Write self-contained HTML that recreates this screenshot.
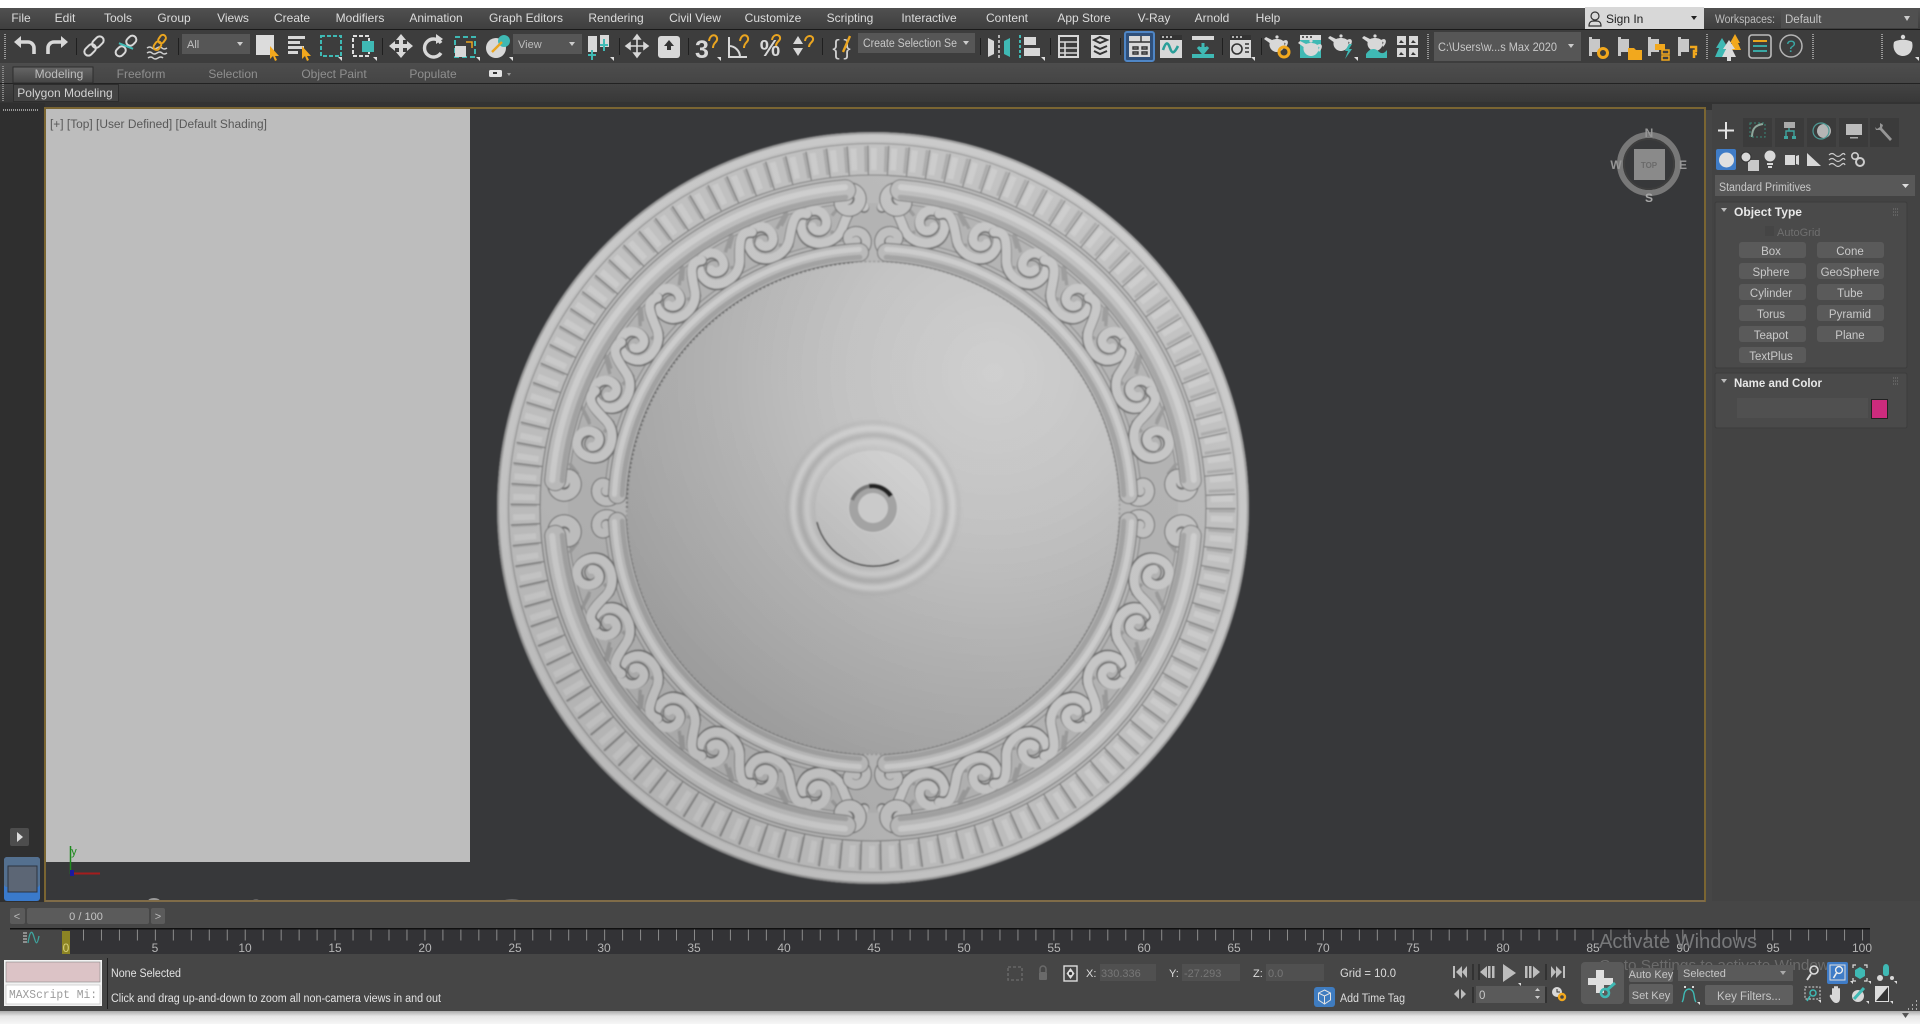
<!DOCTYPE html>
<html lang="en">
<head>
<meta charset="utf-8">
<title>3ds Max 2020</title>
<style>
html,body{margin:0;padding:0;background:#454545;overflow:hidden;width:1920px;height:1024px}
svg{display:block}
text{font-family:"Liberation Sans",Arial,sans-serif;font-size:12px;fill:#d4d4d4}
.m{text-anchor:middle}
.menu{fill:#dcdcdc}
.dim{fill:#8f8f8f}
.btn{fill:#c9c9c9;text-anchor:middle;font-size:11.5px}
.ico{fill:none;stroke:#d8d8d8;stroke-width:2}
.teal{fill:none;stroke:#3fb9b4;stroke-width:2}
.org{fill:none;stroke:#eaa520;stroke-width:2}
.w{fill:#d8d8d8}
.t{fill:#3fb9b4}
.o{fill:#f2a81d}
.sep{stroke:#1f1f1f;stroke-width:1}
.tk{fill:#b5b5b5;text-anchor:middle;font-size:12px}
</style>
</head>
<body>
<svg width="1920" height="1024" viewBox="0 0 1920 1024" xmlns="http://www.w3.org/2000/svg">
<defs>
<linearGradient id="mb" x1="0" y1="0" x2="0" y2="1"><stop offset="0" stop-color="#505050"/><stop offset="1" stop-color="#3e3e3e"/></linearGradient>
<linearGradient id="rb" x1="0" y1="0" x2="0" y2="1"><stop offset="0" stop-color="#4d4d4d"/><stop offset="1" stop-color="#454545"/></linearGradient>
<linearGradient id="pb" x1="0" y1="0" x2="0" y2="1"><stop offset="0" stop-color="#434343"/><stop offset="1" stop-color="#383838"/></linearGradient>
<linearGradient id="ab" x1="0" y1="0" x2="0" y2="1"><stop offset="0" stop-color="#666"/><stop offset="1" stop-color="#454545"/></linearGradient>
<linearGradient id="wb" x1="0" y1="0" x2="0" y2="1"><stop offset="0" stop-color="#aaa"/><stop offset=".4" stop-color="#e6e6e6"/><stop offset="1" stop-color="#f6f6f6"/></linearGradient>
<radialGradient id="dome" gradientUnits="userSpaceOnUse" cx="120" cy="-135" r="470"><stop offset="0" stop-color="#d0d0d0"/><stop offset=".3" stop-color="#c4c4c4"/><stop offset=".62" stop-color="#b0b0b0"/><stop offset="1" stop-color="#9c9c9c"/></radialGradient>
<linearGradient id="lit" gradientUnits="userSpaceOnUse" x1="260" y1="-300" x2="-260" y2="300"><stop offset="0" stop-color="#fff" stop-opacity=".08"/><stop offset=".5" stop-color="#888" stop-opacity="0"/><stop offset="1" stop-color="#000" stop-opacity=".08"/></linearGradient>
<linearGradient id="plate" gradientUnits="userSpaceOnUse" x1="40" y1="-45" x2="-40" y2="45"><stop offset="0" stop-color="#d2d2d2"/><stop offset="1" stop-color="#bcbcbc"/></linearGradient>
<filter id="soft" x="-5%" y="-5%" width="110%" height="110%"><feGaussianBlur stdDeviation=".7"/></filter>
<filter id="soft2" x="-10%" y="-10%" width="120%" height="120%"><feGaussianBlur stdDeviation="2.2"/></filter>
<g id="tp">
<path d="M-7,-3 C-5,-7 5,-7 7,-3 C9,2 5,7 0,7 C-5,7 -9,2 -7,-3 Z"/>
<path d="M-6,-1 L-13,-6 L-11,-8 L-5,-5 Z"/>
<path d="M6,-4 C11,-7 13,-2 8,3 L7,1 C9,-1 9,-3 6,-2 Z"/>
<circle cx="0" cy="-8" r="1.6"/>
</g>
<g id="sc">
<path d="M-30,-17 L-16,-6 M-24,14 L-12,8 M22,-16 L30,-6" stroke="#999" stroke-width="3" fill="none"/>
<path d="M-46,-8 C-36,-16 -30,-4 -22,8 C-16,16 -2,20 8,12 C16,5 14,-12 2,-14 C-8,-15 -13,-5 -9,2 C-6,7 2,6 3,0" fill="none" stroke="#6e6e6e" stroke-width="9.5" stroke-linecap="round" transform="translate(.4,.8)"/>
<path d="M-46,-8 C-36,-16 -30,-4 -22,8 C-16,16 -2,20 8,12 C16,5 14,-12 2,-14 C-8,-15 -13,-5 -9,2 C-6,7 2,6 3,0" fill="none" stroke="#c6c6c6" stroke-width="8" stroke-linecap="round"/>
<path d="M-6,-3 C-3,-8 5,-8 7,-2" fill="none" stroke="#6a6a6a" stroke-width="1"/>
</g>
<g id="hook">
<path d="M30,-319 C16,-322 10,-312 14,-304 C18,-296 28,-296 32,-302 C35,-307 30,-312 26,-309" fill="none" stroke="#6a6a6a" stroke-width="13" stroke-linecap="round"/>
<path d="M30,-319 C16,-322 10,-312 14,-304 C18,-296 28,-296 32,-302 C35,-307 30,-312 26,-309" fill="none" stroke="#c2c2c2" stroke-width="11" stroke-linecap="round"/>
<path d="M16,-255 C6,-258 4,-268 10,-274 C16,-279 25,-276 25,-270 C25,-265 19,-264 17,-267" fill="none" stroke="#6a6a6a" stroke-width="11" stroke-linecap="round"/>
<path d="M16,-255 C6,-258 4,-268 10,-274 C16,-279 25,-276 25,-270 C25,-265 19,-264 17,-267" fill="none" stroke="#c0c0c0" stroke-width="9" stroke-linecap="round"/>
</g>
<g id="q">
<path d="M24,-304.5 A305.5,305.5 0 0 1 304.5,-24" fill="none" stroke="#8a8a8a" stroke-width="1.1"/>
<path d="M20,-268 A268.5,268.5 0 0 1 268,-20" fill="none" stroke="#8a8a8a" stroke-width="1.1"/>
<use href="#sc" transform="rotate(11.5) translate(0,-288) scale(1.12)"/>
<use href="#sc" transform="rotate(22.5) translate(0,-288) scale(1.12)"/>
<use href="#sc" transform="rotate(33.5) translate(0,-288) scale(1.12)"/>
<use href="#sc" transform="rotate(44.5) translate(0,-288) scale(1.12)"/>
<use href="#sc" transform="rotate(55.5) translate(0,-288) scale(1.12)"/>
<use href="#sc" transform="rotate(66.5) translate(0,-288) scale(1.12)"/>
<use href="#sc" transform="rotate(77) translate(0,-288) scale(1.12)"/>
<use href="#hook"/>
<use href="#hook" transform="matrix(0,-1,-1,0,0,0)"/>
<path d="M27.8,-317.8 A319,319 0 0 1 317.8,-27.8" fill="none" stroke="#787878" stroke-width="22" stroke-linecap="round"/>
<path d="M27.8,-317.8 A319,319 0 0 1 317.8,-27.8" fill="none" stroke="#bdbdbd" stroke-width="20" stroke-linecap="round"/>
<path d="M27.2,-310.8 A312,312 0 0 1 310.8,-27.2" fill="none" stroke="#a4a4a4" stroke-width="5" stroke-linecap="round"/>
<path d="M28,-320.8 A322,322 0 0 1 320.8,-28" fill="none" stroke="#cecece" stroke-width="6" stroke-linecap="round"/>
<path d="M13.4,-255.6 A256,256 0 0 1 255.6,-13.4" fill="none" stroke="#727272" stroke-width="19" stroke-linecap="round"/>
<path d="M13.4,-255.6 A256,256 0 0 1 255.6,-13.4" fill="none" stroke="#bababa" stroke-width="17" stroke-linecap="round"/>
<path d="M13.1,-250.7 A251,251 0 0 1 250.7,-13.1" fill="none" stroke="#a2a2a2" stroke-width="5" stroke-linecap="round"/>
<path d="M13.6,-258.6 A259,259 0 0 1 258.6,-13.6" fill="none" stroke="#cccccc" stroke-width="5" stroke-linecap="round"/>
</g>
</defs>

<!-- base -->
<rect width="1920" height="1024" fill="#464646"/>
<rect width="1920" height="8" fill="#fff"/>
<rect y="8" width="1920" height="22" fill="url(#mb)"/>
<rect y="29" width="1920" height="1" fill="#1a1a1a"/>
<rect y="30" width="1920" height="33" fill="#3d3d3d"/>
<rect y="63" width="1920" height="20" fill="url(#rb)"/>
<rect y="83" width="1920" height="1" fill="#222"/>
<rect y="84" width="1920" height="18" fill="url(#pb)"/>
<rect y="102" width="1920" height="8" fill="#333"/>
<rect y="103" width="45" height="800" fill="#2f2f2f"/>

<!-- viewport -->
<rect x="45" y="108" width="1660" height="793" fill="#37383a"/>
<rect x="46" y="109" width="424" height="753" fill="#bdbdbd"/>

<!-- ceiling medallion -->
<g transform="translate(873,508)">
<g filter="url(#soft)">
<circle r="376" fill="#c0c0c0"/>
<circle r="375" fill="none" stroke="#969696" stroke-width="2"/>
<circle r="370" fill="none" stroke="#c8c8c8" stroke-width="6"/>
<circle r="364.5" fill="none" stroke="#8c8c8c" stroke-width="1"/>
<circle r="364" fill="#bfbfbf" opacity="0"/>
<circle r="349" fill="none" stroke="#c0c0c0" stroke-width="29"/>
<circle r="349" fill="none" stroke="#a9a9a9" stroke-width="26" stroke-dasharray="3 16.93" stroke-dashoffset="-1.5"/>
<circle r="349" fill="none" stroke="#cbcbcb" stroke-width="22" stroke-dasharray="6 13.93" stroke-dashoffset="-8"/>
<circle r="348" fill="none" stroke="#7a7a7a" stroke-width="29" stroke-dasharray="1.2 18.73"/>
<circle r="333" fill="#b8b8b8" stroke="#7c7c7c" stroke-width="1.1"/>
<circle r="286" fill="none" stroke="#b2b2b2" stroke-width="38"/>
<use href="#q"/>
<use href="#q" transform="scale(-1,1)"/>
<use href="#q" transform="scale(1,-1)"/>
<use href="#q" transform="scale(-1,-1)"/>
<circle r="246" fill="url(#dome)"/>
<circle r="246.5" fill="none" stroke="#666" stroke-width="1.6" stroke-dasharray="2.2 2.2" opacity=".4"/>
<path d="M-246,0 A246.5,246.5 0 0 1 -20,-245.5" fill="none" stroke="#4a4a4a" stroke-width="1.8" stroke-dasharray="2.2 2.2" opacity=".55"/>
</g>
<g filter="url(#soft2)">
<circle r="80" fill="none" stroke="#d8d8d8" stroke-width="5" opacity=".7"/>
<circle r="73" fill="none" stroke="#989898" stroke-width="4" opacity=".5"/>
<circle r="66" fill="none" stroke="#d4d4d4" stroke-width="5" opacity=".7"/>
<circle r="85" fill="none" stroke="#8c8c8c" stroke-width="3" opacity=".3"/>
</g>
<g filter="url(#soft)">
<circle r="57.5" fill="url(#plate)"/>
<path d="M-56,14 A58,58 0 0 0 26,52" fill="none" stroke="#444" stroke-width="1.4"/>
<circle r="24" fill="#a3a3a3"/>
<path d="M-4,-22 A22.5,22.5 0 0 1 18,-12" fill="none" stroke="#222" stroke-width="5"/>
<path d="M-21,-8 A23,23 0 0 1 -4,-22" fill="none" stroke="#777" stroke-width="4"/>
<circle r="24.5" fill="none" stroke="#d8d8d8" stroke-width="1" opacity=".5"/>
<circle r="15" fill="#cacaca"/>
</g>
<circle r="376" fill="url(#lit)"/>
</g>

<!-- bumps below viewport -->
<ellipse cx="154" cy="901" rx="6" ry="3" fill="#9a9a9a"/>
<ellipse cx="256" cy="901" rx="4" ry="1.5" fill="#909090"/>
<ellipse cx="512" cy="901" rx="10" ry="1.5" fill="#8f8f8f"/>

<!-- viewport border -->
<rect x="45" y="108" width="1660" height="793" fill="none" stroke="#7a6532" stroke-width="2"/>
<rect x="45" y="900" width="1660" height="2" fill="#806c48"/>
<text x="50" y="128" style="fill:#585858;font-size:11.5px" textLength="217" lengthAdjust="spacingAndGlyphs">[+] [Top] [User Defined] [Default Shading]</text>

<!-- axis tripod -->
<line x1="70.5" y1="846" x2="70.5" y2="874" stroke="#1d8a1d" stroke-width="1.5"/>
<line x1="71" y1="873.5" x2="100" y2="873.5" stroke="#a51d1d" stroke-width="2"/>
<rect x="70" y="870" width="4" height="6" fill="#1a1aa0"/>
<text x="74" y="855" class="m" style="fill:#1d8a1d;font-size:11px">y</text>

<!-- ViewCube -->
<circle cx="1649" cy="164" r="29" fill="none" stroke="#787878" stroke-width="6"/>
<circle cx="1649" cy="164" r="25" fill="none" stroke="#3e3e3e" stroke-width="2"/>
<rect x="1634" y="149" width="31" height="31" fill="#8a8a8a"/>
<text x="1649" y="168" class="m" style="fill:#6a6a6a;font-size:8px;font-weight:bold">TOP</text>
<text x="1649" y="137" class="m" style="fill:#969696;font-size:12px;font-weight:bold">N</text>
<text x="1649" y="202" class="m" style="fill:#a8a8a8;font-size:12px;font-weight:bold">S</text>
<text x="1683" y="169" class="m" style="fill:#969696;font-size:12px;font-weight:bold">E</text>
<text x="1616" y="169" class="m" style="fill:#969696;font-size:12px;font-weight:bold">W</text>

<!-- menu -->
<g class="menu">
<text x="21" y="22" class="m menu">File</text>
<text x="65" y="22" class="m menu">Edit</text>
<text x="118" y="22" class="m menu">Tools</text>
<text x="174" y="22" class="m menu">Group</text>
<text x="233" y="22" class="m menu">Views</text>
<text x="292" y="22" class="m menu">Create</text>
<text x="360" y="22" class="m menu">Modifiers</text>
<text x="436" y="22" class="m menu">Animation</text>
<text x="526" y="22" class="m menu">Graph Editors</text>
<text x="616" y="22" class="m menu">Rendering</text>
<text x="695" y="22" class="m menu">Civil View</text>
<text x="773" y="22" class="m menu">Customize</text>
<text x="850" y="22" class="m menu">Scripting</text>
<text x="929" y="22" class="m menu">Interactive</text>
<text x="1007" y="22" class="m menu">Content</text>
<text x="1084" y="22" class="m menu">App Store</text>
<text x="1154" y="22" class="m menu">V-Ray</text>
<text x="1212" y="22" class="m menu">Arnold</text>
<text x="1268" y="22" class="m menu">Help</text>
</g>

<!-- sign in / workspaces -->
<rect x="1585" y="7" width="119" height="22" fill="#d8d8d8"/>
<circle cx="1595" cy="16" r="4" fill="none" stroke="#333" stroke-width="1.2"/>
<path d="M1589,26 C1589,21 1592,21 1595,21 C1598,21 1601,21 1601,26 Z" fill="none" stroke="#333" stroke-width="1.2"/>
<text x="1606" y="23" style="fill:#222">Sign In</text>
<path d="M1691,16 h6 l-3,4 z" fill="#222"/>
<text x="1715" y="23" style="fill:#bdbdbd;font-size:11.5px" textLength="60" lengthAdjust="spacingAndGlyphs">Workspaces:</text>
<rect x="1781" y="8" width="137" height="20" fill="#505050"/>
<text x="1785" y="23" style="fill:#c4c4c4;font-size:11.5px">Default</text>
<path d="M1904,16 h6 l-3,5 z" fill="#ccc"/>

<!-- grips -->
<line x1="5" y1="34" x2="5" y2="60" stroke="#999" stroke-width="2" stroke-dasharray="1 1"/>
<line x1="3" y1="66" x2="3" y2="101" stroke="#888" stroke-width="2" stroke-dasharray="1 1"/>
<line x1="3" y1="110" x2="38" y2="110" stroke="#999" stroke-width="2" stroke-dasharray="1 1"/>
<line x1="1712" y1="111" x2="1917" y2="111" stroke="#8b8b8b" stroke-width="2" stroke-dasharray="1 1"/>
<line x1="3" y1="908" x2="3" y2="952" stroke="#888" stroke-width="2" stroke-dasharray="1 1"/>

<!-- toolbar -->
<g transform="translate(25,46)"><path d="M-7,-4 H3 A6,6 0 0 1 9,2 V8" fill="none" stroke="#d8d8d8" stroke-width="3.6"/><path d="M-11,-4 L-4,-10 V2 Z" class="w"/></g>
<g transform="translate(57,46) scale(-1,1)"><path d="M-7,-4 H3 A6,6 0 0 1 9,2 V8" fill="none" stroke="#d8d8d8" stroke-width="3.6"/><path d="M-11,-4 L-4,-10 V2 Z" class="w"/></g>
<line x1="76.5" y1="38" x2="76.5" y2="55" class="sep"/>
<g transform="translate(94,46) rotate(-45)"><rect x="-12" y="-4" width="13" height="8" rx="4" class="ico"/><rect x="-1" y="-4" width="13" height="8" rx="4" class="ico"/></g>
<g transform="translate(126,46) rotate(-45)"><rect x="-13" y="-4" width="11" height="8" rx="4" class="ico"/><rect x="2" y="-4" width="11" height="8" rx="4" class="ico"/><path d="M-3,-7 L3,7" class="teal"/></g>
<g transform="translate(158,46)"><path d="M-11,2 q3,-2 5,0 t5,0 t5,0 t5,0 M-11,7 q3,-2 5,0 t5,0 t5,0 t5,0 M-10,12 q3,-2 5,0 t5,0 t5,0" fill="none" stroke="#cfcfcf" stroke-width="1.5"/><g transform="translate(2,-4) rotate(-55)"><rect x="-9" y="-3" width="9" height="6" rx="3" class="org"/><rect x="-1" y="-3" width="9" height="6" rx="3" class="org"/></g></g>
<line x1="178.5" y1="38" x2="178.5" y2="55" class="sep"/>
<rect x="182" y="34" width="68" height="20" fill="#565656"/>
<text x="187" y="48" style="fill:#c2c2c2;font-size:11px">All</text>
<path d="M237,42 h6 l-3,4 z" fill="#ccc"/>
<rect x="256" y="35" width="18" height="20" fill="#dcdcdc"/>
<path d="M270,46 l0,13 l3,-3 l2,5 l2,-1 l-2,-4 h4 z" class="o"/>
<g class="w"><rect x="288" y="36" width="17" height="3"/><rect x="288" y="41" width="12" height="3"/><rect x="288" y="46" width="16" height="3"/><rect x="288" y="51" width="10" height="3"/></g>
<path d="M302,46 l0,13 l3,-3 l2,5 l2,-1 l-2,-4 h4 z" class="o"/>
<rect x="321" y="36" width="20" height="20" fill="none" stroke="#3fb9b4" stroke-width="2" stroke-dasharray="4 2"/>
<path d="M342,61 v-4 h-4 z" fill="#ddd"/>
<rect x="353" y="36" width="16" height="20" fill="none" stroke="#ddd" stroke-width="2" stroke-dasharray="4 2"/>
<rect x="362" y="41" width="12" height="11" fill="#3fb9b4"/>
<path d="M377,61 v-4 h-4 z" fill="#ddd"/>
<line x1="382.5" y1="38" x2="382.5" y2="55" class="sep"/>
<path d="M401,34 l5,6 h-3 v4 h4 v-3 l6,5 l-6,5 v-3 h-4 v4 h3 l-5,6 l-5,-6 h3 v-4 h-4 v3 l-6,-5 l6,-5 v3 h4 v-4 h-3 z" class="w"/>
<path d="M441,43 A9,9 0 1 0 441,53" fill="none" stroke="#d8d8d8" stroke-width="3.4"/>
<path d="M436,34 l7,5 l-7,5 z" class="w"/>
<rect x="455" y="37" width="20" height="20" fill="none" stroke="#3fb9b4" stroke-width="2" stroke-dasharray="5 3"/>
<rect x="455" y="46" width="11" height="11" class="w"/>
<path d="M466,42 h6 v6" fill="none" stroke="#eaa520" stroke-width="1.5"/>
<path d="M480,61 v-4 h-4 z" fill="#ddd"/>
<circle cx="496" cy="48" r="10" class="w"/>
<circle cx="504" cy="41" r="6" class="t"/>
<path d="M492,52 L502,42" stroke="#eaa520" stroke-width="2.4"/>
<path d="M513,61 v-4 h-4 z" fill="#ddd"/>
<rect x="513" y="34" width="69" height="20" fill="#565656"/>
<text x="518" y="48" style="fill:#bdbdbd;font-size:11px">View</text>
<path d="M569,42 h6 l-3,4 z" fill="#ccc"/>
<g transform="translate(599,46)"><rect x="-11" y="-10" width="9" height="16" class="w"/><rect x="1" y="-11" width="9" height="12" class="w"/><path d="M-7,4 v10 M-11,9 h8 M5,-7 v12 M1,-1 h8" stroke="#3fb9b4" stroke-width="2" fill="none"/></g>
<path d="M614,61 v-4 h-4 z" fill="#ddd"/>
<line x1="619.5" y1="38" x2="619.5" y2="55" class="sep"/>
<path d="M637,36 v20 M627,46 h20 M637,35 l-3,4 h6 z M648,46 l-4,-3 v6 z M626,46 l4,-3 v6 z M637,57 l-3,-4 h6 z" stroke="#d8d8d8" stroke-width="1.6" fill="#d8d8d8"/>
<rect x="658" y="36" width="22" height="22" rx="3" class="w"/>
<path d="M669,40 l5,6 h-3 v4 h-4 v-4 h-3 z" fill="#333"/>
<line x1="688.5" y1="38" x2="688.5" y2="55" class="sep"/>
<text x="702" y="58" class="m" style="fill:#d8d8d8;font-size:25px;font-weight:bold">3</text>
<path d="M709,41 c1,-8 9,-7 8,-1 c-1,3 -4,3 -4,8" class="org"/>
<path d="M721,61 v-4 h-4 z" fill="#ddd"/>
<path d="M729,37 V57 H747 M729,46 C735,46 740,51 740,57" fill="none" stroke="#d8d8d8" stroke-width="2"/>
<path d="M740,41 c1,-8 9,-7 8,-1 c-1,3 -4,3 -4,8" class="org"/>
<text x="770" y="56" class="m" style="fill:#d8d8d8;font-size:23px;font-weight:bold">%</text>
<path d="M772,40 c1,-7 9,-6 8,-1 c-1,3 -4,3 -4,7" class="org"/>
<path d="M793,44 l5,-8 l5,8 z M793,48 h10 l-5,8 z" class="w"/>
<path d="M805,41 c1,-7 9,-6 8,-1 c-1,3 -4,3 -4,7" class="org"/>
<line x1="822.5" y1="38" x2="822.5" y2="55" class="sep"/>
<text x="836" y="55" class="m" style="fill:#d0d0d0;font-size:22px">{</text>
<text x="847" y="55" class="m" style="fill:#d0d0d0;font-size:22px">}</text>
<path d="M843,52 L850,36" stroke="#eaa520" stroke-width="2.4"/>
<rect x="858" y="33" width="117" height="20" fill="#565656"/>
<text x="863" y="47" style="fill:#c8c8c8;font-size:11.5px" textLength="94" lengthAdjust="spacingAndGlyphs">Create Selection Se</text>
<path d="M963,41 h6 l-3,4 z" fill="#ccc"/>
<line x1="980.5" y1="38" x2="980.5" y2="55" class="sep"/>
<path d="M988,38 l6,3 v13 l-6,3 z" class="w"/>
<line x1="999" y1="35" x2="999" y2="58" stroke="#ddd" stroke-width="1.5" stroke-dasharray="3 2"/>
<path d="M1010,38 l-6,3 v13 l6,3 z" class="t"/>
<line x1="1020" y1="35" x2="1020" y2="58" stroke="#3fb9b4" stroke-width="2" stroke-dasharray="3 2"/>
<rect x="1024" y="37" width="12" height="8" class="w"/>
<rect x="1024" y="48" width="16" height="8" class="w"/>
<path d="M1045,61 v-4 h-4 z" fill="#ddd"/>
<line x1="1050.5" y1="38" x2="1050.5" y2="55" class="sep"/>
<rect x="1059" y="36" width="19" height="21" fill="none" stroke="#d8d8d8" stroke-width="2"/>
<path d="M1059,42 h19 M1059,48 h19 M1059,53 h19 M1065,42 v15" stroke="#d8d8d8" stroke-width="1.6"/>
<rect x="1091" y="35" width="19" height="23" class="w"/>
<path d="M1094,40 l6,-3 l7,3 l-7,3 z M1094,46 l6,3 l7,-3 M1094,51 l6,3 l7,-3" fill="none" stroke="#333" stroke-width="2"/>
<line x1="1120.5" y1="38" x2="1120.5" y2="55" class="sep"/>
<rect x="1125" y="32" width="29" height="29" rx="2" fill="#30507a" stroke="#4f86c6" stroke-width="2"/>
<rect x="1129" y="36" width="21" height="21" class="w"/>
<path d="M1129,42 h12 v-6 M1141,42 h9 M1133,47 h5 v2 h-5z M1142,47 h5 v2 h-5z M1133,52 h5 v2 h-5z M1142,52 h5 v2 h-5z" stroke="#333" stroke-width="1.4" fill="none"/>
<rect x="1160" y="35" width="22" height="23" class="w"/>
<rect x="1160" y="35" width="22" height="5" fill="#333"/><path d="M1162,37 h2 M1166,37 h2 M1170,37 h2" stroke="#ddd" stroke-width="1.5"/>
<path d="M1163,50 c3,-9 5,-8 7,-2 s4,6 8,-2" class="teal" style="stroke-width:2.6;stroke:#2a9e99"/>
<rect x="1192" y="36" width="22" height="4" class="w"/>
<path d="M1203,43 v8 M1198,47 l5,6 l5,-6" stroke="#3fb9b4" stroke-width="3" fill="#3fb9b4"/>
<rect x="1192" y="54" width="22" height="4" class="t"/>
<line x1="1222.5" y1="38" x2="1222.5" y2="55" class="sep"/>
<rect x="1230" y="35" width="21" height="23" class="w"/>
<rect x="1230" y="35" width="21" height="5" fill="#333"/><path d="M1232,37 h2 M1236,37 h2 M1240,37 h2" stroke="#ddd" stroke-width="1.5"/>
<circle cx="1237" cy="49" r="5" fill="none" stroke="#333" stroke-width="1.6"/>
<path d="M1245,44 h4 M1245,48 h4 M1245,52 h4" stroke="#333" stroke-width="1.6"/>
<path d="M1255,61 v-4 h-4 z" fill="#ddd"/>
<line x1="1261.5" y1="38" x2="1261.5" y2="55" class="sep"/>
<use href="#tp" transform="translate(1277,45)" class="w"/>
<circle cx="1284" cy="52" r="5" fill="none" stroke="#f2a81d" stroke-width="3"/>
<rect x="1300" y="35" width="21" height="23" class="t"/>
<rect x="1300" y="35" width="21" height="5" fill="#ddd"/><path d="M1302,37 h2 M1306,37 h2 M1310,37 h2" stroke="#333" stroke-width="1.5"/>
<use href="#tp" transform="translate(1311,49)" class="w"/>
<use href="#tp" transform="translate(1341,44)" class="w"/>
<path d="M1349,44 l-4,7 h3 l-3,8 l7,-10 h-3 l3,-5 z" class="t"/>
<path d="M1358,61 v-4 h-4 z" fill="#ddd"/>
<use href="#tp" transform="translate(1375,44)" class="w"/>
<path d="M1366,54 c4,-6 9,-6 12,-3 s6,3 9,-1 v8 h-21 z" class="t"/>
<g class="w"><rect x="1397" y="36" width="9" height="9"/><rect x="1409" y="36" width="9" height="9"/><rect x="1397" y="48" width="9" height="9"/><rect x="1409" y="48" width="9" height="9"/></g>
<path d="M1399,43 l2,-3 l3,3 z M1411,43 l2,-3 l3,3 z M1399,55 l2,-3 l3,3 z M1411,55 l2,-3 l3,3 z" fill="#333"/>
<line x1="1428" y1="34" x2="1428" y2="60" stroke="#999" stroke-width="2" stroke-dasharray="1 1"/>
<rect x="1434" y="32" width="147" height="29" fill="#565656"/>
<text x="1438" y="51" style="fill:#c8c8c8;font-size:12px" textLength="119" lengthAdjust="spacingAndGlyphs">C:\Users\w...s Max 2020</text>
<path d="M1568,44 h6 l-3,4 z" fill="#ccc"/>
<path d="M1589,37 h3 v2 h8 v13 h-8 v4 h-3 z" fill="#c8c8c8"/>
<circle cx="1603" cy="53" r="4.5" fill="none" stroke="#f2a81d" stroke-width="3"/>
<path d="M1618,37 h3 v2 h8 v13 h-8 v4 h-3 z" fill="#c8c8c8"/>
<path d="M1628,48 h6 l2,2 h6 v10 h-14 z" class="o"/>
<path d="M1648,37 h3 v2 h8 v13 h-8 v4 h-3 z" fill="#c8c8c8"/>
<rect x="1655" y="44" width="10" height="6" class="o"/><rect x="1662" y="50" width="7" height="4" fill="none" stroke="#f2a81d" stroke-width="1.5"/><rect x="1662" y="56" width="7" height="4" fill="none" stroke="#f2a81d" stroke-width="1.5"/>
<path d="M1678,37 h3 v2 h8 v13 h-8 v4 h-3 z" fill="#c8c8c8"/>
<path d="M1690,47 h6 v4 h-2 v3 h3 M1694,54 v4" stroke="#f2a81d" stroke-width="2.5" fill="none"/>
<line x1="1707" y1="34" x2="1707" y2="60" stroke="#999" stroke-width="2" stroke-dasharray="1 1"/>
<path d="M1722,38 l6,10 h-3 l4,9 h-14 l4,-9 h-3 z" class="t"/>
<path d="M1735,34 l5,9 h-2 l3,7 h-12 l3,-7 h-2 z" class="o"/>
<path d="M1729,40 l6,9 h-3 l4,8 h-5 v4 h-4 v-4 h-5 l4,-8 h-3 z" fill="#dcdcdc"/>
<rect x="1749" y="35" width="22" height="23" rx="3" fill="none" stroke="#bcbcbc" stroke-width="1.6"/>
<path d="M1753,41 h14" stroke="#e9a51d" stroke-width="2"/><path d="M1753,46 h14 M1753,51 h14" stroke="#3aa8a4" stroke-width="2"/>
<circle cx="1791" cy="46" r="11" fill="none" stroke="#b4b4b4" stroke-width="1.5"/>
<text x="1791" y="52" class="m" style="fill:#3aa8a4;font-size:17px">?</text>
<line x1="1813" y1="34" x2="1813" y2="60" stroke="#999" stroke-width="2" stroke-dasharray="1 1"/>
<line x1="1882" y1="34" x2="1882" y2="60" stroke="#999" stroke-width="2" stroke-dasharray="1 1"/>
<path d="M1894,42 c4,-3 14,-3 18,0 c2,7 -2,14 -9,14 s-11,-7 -9,-14 z" class="w"/><circle cx="1903" cy="37" r="2.2" class="w"/>
<path d="M1919,61 v-4 h-4 z" fill="#ddd"/>

<!-- ribbon -->
<path d="M13,83 V67 H93 V83 Z" fill="url(#ab)" stroke="#2d2d2d" stroke-width="1"/>
<text x="59" y="78" class="m" style="fill:#bdbdbd">Modeling</text>
<text x="141" y="78" class="m dim">Freeform</text>
<text x="233" y="78" class="m dim">Selection</text>
<text x="334" y="78" class="m dim">Object Paint</text>
<text x="433" y="78" class="m dim">Populate</text>
<rect x="489" y="70" width="13" height="7" rx="1.5" fill="#e2e2e2"/><rect x="493" y="72" width="4" height="2" fill="#333"/>
<path d="M507,73 h4 l-2,3 z" fill="#999"/>
<rect x="13.5" y="84.5" width="105" height="17" fill="#444" stroke="#2d2d2d"/>
<text x="65" y="97" class="m" style="fill:#d2d2d2">Polygon Modeling</text>

<!-- left dock -->
<rect x="10" y="828" width="19" height="18" rx="2" fill="#4d4d4d"/>
<path d="M17,832 l6,5 l-6,5 z" fill="#ddd"/>
<rect x="4" y="857" width="36" height="44" rx="3" fill="#3a7acb"/>
<rect x="4" y="857" width="36" height="30" rx="3" fill="#54708f"/>
<rect x="8" y="866" width="29" height="26" fill="#5c6675" stroke="#2c3440"/>

<!-- command panel -->
<rect x="1712" y="104" width="208" height="797" fill="#434343"/>
<rect x="1743" y="118" width="29" height="29" fill="#3b3b3b"/>
<rect x="1775" y="118" width="29" height="29" fill="#3b3b3b"/>
<rect x="1807" y="118" width="29" height="29" fill="#3b3b3b"/>
<rect x="1839" y="118" width="29" height="29" fill="#3b3b3b"/>
<rect x="1870" y="118" width="29" height="29" fill="#3b3b3b"/>
<path d="M1726,122 v17 M1718,130.5 h16" stroke="#e4e4e4" stroke-width="2"/>
<g fill="none"><path d="M1752,137 C1752,128 1756,125 1763,124" stroke="#8fa89c" stroke-width="2"/><rect x="1750" y="123" width="15" height="14" stroke="#3a8a78" stroke-width="1" stroke-dasharray="2 2"/></g>
<rect x="1784" y="122" width="11" height="6" fill="#aaa"/><path d="M1789,128 v3 M1786,136 v-5 h8 v5" stroke="#3fa59f" stroke-width="1.4" fill="none"/><rect x="1784" y="136" width="4" height="3" fill="#3fa59f"/><rect x="1792" y="136" width="4" height="3" fill="#3fa59f"/>
<circle cx="1824" cy="131" r="7" fill="#b5b5b5"/><circle cx="1821" cy="131" r="8" fill="none" stroke="#4e9a95" stroke-width="1.2"/>
<rect x="1846" y="124" width="16" height="11" fill="#bcbcbc"/><rect x="1850" y="137" width="8" height="1.5" fill="#aaa"/>
<path d="M1880,123 l3,2 l-1,3 l10,11 l-2,2 l-10,-11 l-4,0 l-1,-3 l2,2 l3,-2 z" fill="#969696"/>
<rect x="1716" y="149" width="20" height="21" rx="2" fill="#3f7cc7"/>
<circle cx="1726.5" cy="160" r="7.5" fill="#e0e0e0"/>
<rect x="1748" y="160" width="11" height="11" fill="#c9c9c9"/><circle cx="1746" cy="157" r="5" fill="#d8d8d8" stroke="#333"/>
<circle cx="1770" cy="156" r="5.5" class="w"/><rect x="1767" y="163" width="6" height="2" class="w"/><rect x="1768" y="166" width="4" height="2" class="w"/>
<rect x="1785" y="155" width="10" height="10" class="w"/><path d="M1796,156 l3,-1 v10 l-3,-1 z" class="w"/>
<path d="M1807,153 v13 h14 z" class="w"/>
<path d="M1829,155 q3,-3 6,0 t6,0 t4,0 M1829,160 q3,-3 6,0 t6,0 t4,0 M1829,165 q3,-3 6,0 t6,0 t4,0" fill="none" stroke="#ccc" stroke-width="1.2"/>
<circle cx="1855" cy="156" r="3.2" fill="none" stroke="#ccc" stroke-width="1.6"/>
<circle cx="1860" cy="162" r="4" fill="none" stroke="#ccc" stroke-width="2"/>
<rect x="1715" y="175" width="200" height="21" fill="#585858"/>
<text x="1719" y="191" style="fill:#c8c8c8;font-size:11.5px" textLength="92" lengthAdjust="spacingAndGlyphs">Standard Primitives</text>
<path d="M1902,184 h7 l-3.5,4 z" fill="#ddd"/>

<rect x="1715" y="202" width="192" height="166" rx="2" fill="#4a4a4a" stroke="#3c3c3c"/>
<path d="M1721,208 h6 l-3,4 z" fill="#bbb"/>
<text x="1734" y="216" style="fill:#e8e8e8;font-weight:bold;font-size:11.5px" textLength="68" lengthAdjust="spacingAndGlyphs">Object Type</text>
<path d="M1893,209 h6 M1893,212 h6 M1893,215 h6" stroke="#6a6a6a" stroke-width="1.4" stroke-dasharray="1 1"/>
<rect x="1765" y="226" width="9" height="10" fill="#454545"/>
<text x="1777" y="236" style="fill:#6f6f6f;font-size:11px">AutoGrid</text>
<g fill="#5a5a5a">
<rect x="1739" y="242" width="67" height="16" rx="3"/><rect x="1817" y="242" width="67" height="16" rx="3"/>
<rect x="1739" y="263" width="67" height="16" rx="3"/><rect x="1817" y="263" width="67" height="16" rx="3"/>
<rect x="1739" y="284" width="67" height="16" rx="3"/><rect x="1817" y="284" width="67" height="16" rx="3"/>
<rect x="1739" y="305" width="67" height="16" rx="3"/><rect x="1817" y="305" width="67" height="16" rx="3"/>
<rect x="1739" y="326" width="67" height="16" rx="3"/><rect x="1817" y="326" width="67" height="16" rx="3"/>
<rect x="1739" y="347" width="67" height="16" rx="3"/>
</g>
<text x="1771" y="255" class="btn">Box</text><text x="1850" y="255" class="btn">Cone</text>
<text x="1771" y="276" class="btn">Sphere</text><text x="1850" y="276" class="btn">GeoSphere</text>
<text x="1771" y="297" class="btn">Cylinder</text><text x="1850" y="297" class="btn">Tube</text>
<text x="1771" y="318" class="btn">Torus</text><text x="1850" y="318" class="btn">Pyramid</text>
<text x="1771" y="339" class="btn">Teapot</text><text x="1850" y="339" class="btn">Plane</text>
<text x="1771" y="360" class="btn">TextPlus</text>

<rect x="1715" y="373" width="192" height="55" rx="2" fill="#4a4a4a" stroke="#3c3c3c"/>
<path d="M1721,379 h6 l-3,4 z" fill="#bbb"/>
<text x="1734" y="387" style="fill:#e8e8e8;font-weight:bold;font-size:11.5px" textLength="88" lengthAdjust="spacingAndGlyphs">Name and Color</text>
<path d="M1893,378 h6 M1893,381 h6 M1893,384 h6" stroke="#6a6a6a" stroke-width="1.4" stroke-dasharray="1 1"/>
<rect x="1737" y="398" width="131" height="20" fill="#505050"/>
<rect x="1871.5" y="399.5" width="16" height="19" fill="#cc2b7d" stroke="#222"/>

<!-- bottom area -->
<rect x="0" y="902" width="1920" height="109" fill="#464646"/>
<rect x="10" y="908" width="15" height="16" rx="2" fill="#5b5b5b"/>
<rect x="27" y="908" width="122" height="16" rx="2" fill="#5b5b5b"/>
<rect x="151" y="908" width="14" height="16" rx="2" fill="#5b5b5b"/>
<text x="17" y="920" class="m" style="fill:#bbb;font-size:11px">&lt;</text>
<text x="158" y="920" class="m" style="fill:#bbb;font-size:11px">&gt;</text>
<text x="86" y="920" class="m" style="fill:#c4c4c4;font-size:11px">0 / 100</text>

<rect x="62" y="929" width="1808" height="25" fill="#333336"/>
<rect x="10" y="928" width="1860" height="1.5" fill="#111"/>
<line x1="83" y1="935" x2="1870" y2="935" stroke="#8c8c8c" stroke-width="11" stroke-dasharray="1 16.97"/>
<path d="M23,933 h4 M23,936 h4 M23,939 h4 M23,942 h4" stroke="#bbb" stroke-width="1.2"/>
<path d="M28,943 c2,-13 4,-13 6,-6 s3,9 5,-1" fill="none" stroke="#3fa59f" stroke-width="1.3"/>
<rect x="62" y="931" width="8" height="23" fill="#8c8424"/>
<text x="66" y="952" class="tk" style="fill:#d6cf7a">0</text>
<text x="155" y="952" class="tk">5</text><text x="245" y="952" class="tk">10</text><text x="335" y="952" class="tk">15</text><text x="425" y="952" class="tk">20</text><text x="515" y="952" class="tk">25</text><text x="604" y="952" class="tk">30</text><text x="694" y="952" class="tk">35</text><text x="784" y="952" class="tk">40</text><text x="874" y="952" class="tk">45</text><text x="964" y="952" class="tk">50</text><text x="1054" y="952" class="tk">55</text><text x="1144" y="952" class="tk">60</text><text x="1234" y="952" class="tk">65</text><text x="1323" y="952" class="tk">70</text><text x="1413" y="952" class="tk">75</text><text x="1503" y="952" class="tk">80</text><text x="1593" y="952" class="tk">85</text><text x="1683" y="952" class="tk">90</text><text x="1773" y="952" class="tk">95</text><text x="1862" y="952" class="tk">100</text>

<!-- script listener -->
<rect x="4" y="960" width="98" height="46" fill="#f2f2f2"/>
<rect x="6" y="962" width="94" height="20" fill="#dcc3c6" stroke="#888" stroke-width=".6"/>
<rect x="6" y="985" width="94" height="19" fill="#fff" stroke="#bbb" stroke-width=".6"/>
<text x="9" y="998" style="font-family:'Liberation Mono',monospace;font-size:11.5px;fill:#9c9c9c" textLength="88" lengthAdjust="spacingAndGlyphs">MAXScript Mi:</text>
<line x1="107.5" y1="958" x2="107.5" y2="1009" stroke="#1f1f1f"/>
<text x="111" y="977" style="fill:#e2e2e2;font-size:11.5px" textLength="70" lengthAdjust="spacingAndGlyphs">None Selected</text>
<text x="111" y="1002" style="fill:#e2e2e2;font-size:11.5px" textLength="330" lengthAdjust="spacingAndGlyphs">Click and drag up-and-down to zoom all non-camera views in and out</text>

<!-- coordinates -->
<rect x="1008" y="967" width="14" height="13" fill="none" stroke="#666" stroke-width="1.6" stroke-dasharray="3 2"/>
<rect x="1039" y="972" width="8" height="8" rx="1" fill="#6a6a6a"/><path d="M1040,972 v-3 a3,3 0 0 1 6,0 v3" fill="none" stroke="#6a6a6a" stroke-width="1.5"/>
<rect x="1064" y="966" width="13" height="15" fill="none" stroke="#ddd" stroke-width="1.4"/>
<path d="M1070.5,968 l4,5.5 l-4,5.5 l-4,-5.5 z" fill="#ddd"/>
<circle cx="1070.5" cy="973.5" r="1.6" fill="#333"/>
<text x="1086" y="977" style="fill:#ddd;font-size:11px">X:</text>
<rect x="1100" y="964" width="56" height="17" fill="#505050"/>
<text x="1101" y="977" style="fill:#777;font-size:11px">330.336</text>
<text x="1169" y="977" style="fill:#ddd;font-size:11px">Y:</text>
<rect x="1182" y="964" width="58" height="17" fill="#505050"/>
<text x="1184" y="977" style="fill:#777;font-size:11px">-27.293</text>
<text x="1253" y="977" style="fill:#ddd;font-size:11px">Z:</text>
<rect x="1266" y="964" width="58" height="17" fill="#505050"/>
<text x="1268" y="977" style="fill:#777;font-size:11px">0.0</text>
<text x="1340" y="977" style="fill:#ddd;font-size:11.5px" textLength="56" lengthAdjust="spacingAndGlyphs">Grid = 10.0</text>
<rect x="1314" y="987" width="21" height="20" rx="3" fill="#3f7cc0"/>
<path d="M1324.5,990 l6,3 v7 l-6,4 l-6,-4 v-7 z M1318.5,993 l6,3 l6,-3 M1324.5,996 v8" fill="none" stroke="#e4e4e4" stroke-width="1"/>
<text x="1340" y="1002" style="fill:#ddd;font-size:11.5px" textLength="65" lengthAdjust="spacingAndGlyphs">Add Time Tag</text>

<!-- watermark -->
<text x="1599" y="948" style="fill:#77787a;font-size:20px" textLength="158" lengthAdjust="spacingAndGlyphs">Activate Windows</text>
<text x="1599" y="970" style="fill:#6b6b6b;font-size:15px" textLength="230" lengthAdjust="spacingAndGlyphs">Go to Settings to activate Window</text>

<!-- playback -->
<g style="fill:#bdbdbd">
<path d="M1453,966 h2 v12 h-2 z M1456,972 l6,-6 v12 z M1462,972 l5,-6 v12 z"/>
<path d="M1480,972 l7,-6 v12 z M1488,966 h2.5 v12 h-2.5 z M1492,966 h2.5 v12 h-2.5 z"/>
<path d="M1503,964 l13,9 l-13,9 z"/>
<path d="M1525,966 h2.5 v12 h-2.5 z M1529,966 h2.5 v12 h-2.5 z M1533,966 l7,6 l-7,6 z"/>
<path d="M1551,966 l5,6 l-5,6 z M1556,966 l6,6 l-6,6 z M1563,966 h2 v12 h-2 z"/>
<path d="M1454,994 l5,-5 v10 z M1461,989 l5,5 l-5,5 z"/>
</g>
<path d="M1521,986 v-3 h-3 z" fill="#ddd"/>
<path d="M1473,964 v16 M1546,964 v16 M1473,987 v16 M1546,987 v16 M1479,964 v16" stroke="#1f1f1f"/>
<rect x="1476" y="986" width="69" height="17" fill="#5a5a5a"/>
<text x="1479" y="999" style="fill:#c8c8c8;font-size:11.5px">0</text>
<path d="M1535,991 l2.5,-3 l2.5,3 z M1535,996 l2.5,3 l2.5,-3 z" fill="#ccc"/>
<circle cx="1557" cy="992" r="5" fill="#d8d8d8"/><path d="M1557,989 v3 h3" stroke="#333" fill="none"/>
<circle cx="1562" cy="997" r="3" fill="none" stroke="#f2a81d" stroke-width="2.4"/>

<!-- keying -->
<rect x="1581" y="962" width="43" height="42" rx="4" fill="#5a5a5a"/>
<path d="M1596,970 h8 v8 h9 v7 h-9 v8 h-8 v-8 h-8 v-7 h8 z" fill="#dedede"/>
<circle cx="1605" cy="993" r="4" fill="none" stroke="#3fb9b4" stroke-width="2.6"/>
<path d="M1607,990 l8,-7" stroke="#3fb9b4" stroke-width="3"/>
<rect x="1629" y="968" width="44" height="14" rx="2" fill="#5f5f5f"/>
<text x="1651" y="978" class="m" style="fill:#c6c6c6;font-size:11px">Auto Key</text>
<rect x="1678" y="965" width="115" height="16" fill="#5a5a5a"/>
<text x="1683" y="977" style="fill:#c6c6c6;font-size:11px">Selected</text>
<path d="M1780,971 h6 l-3,4 z" fill="#aaa"/>
<rect x="1629" y="984" width="44" height="20" rx="2" fill="#5f5f5f"/>
<text x="1651" y="999" class="m" style="fill:#c6c6c6;font-size:11px">Set Key</text>
<path d="M1682,1002 c3,-3 0,-12 7,-13 c7,1 4,10 7,13" fill="none" stroke="#3fb9b4" stroke-width="1.4"/>
<path d="M1684,987 h2 M1692,987 h2" stroke="#ddd" stroke-width="2"/>
<path d="M1700,1005 v-3 h-3 z" fill="#ddd"/>
<rect x="1705" y="985" width="88" height="20" rx="2" fill="#5f5f5f"/>
<text x="1749" y="1000" class="m" style="fill:#c6c6c6;font-size:11.5px">Key Filters...</text>

<!-- viewport navigation -->
<circle cx="1814" cy="970" r="4" fill="none" stroke="#ddd" stroke-width="1.6"/><path d="M1811,974 l-4,6" stroke="#ddd" stroke-width="2"/>
<rect x="1827" y="962" width="21" height="22" rx="2" fill="#3f7cc7"/>
<rect x="1830" y="965" width="15" height="15" fill="none" stroke="#ddd" stroke-width="1"/><circle cx="1839" cy="970" r="3.4" fill="none" stroke="#eee" stroke-width="1.4"/><path d="M1836.5,973 l-3,5" stroke="#eee" stroke-width="1.6"/>
<path d="M1853,968 v-3 h3 M1864,965 h3 v3 M1853,978 v3 h3 M1864,981 h3 v-3" stroke="#ddd" fill="none" stroke-width="1.2"/>
<path d="M1860,967 l5,3 v6 l-5,3 l-5,-3 v-6 z" class="t"/>
<path d="M1886,964 c2,0 3,2 3,4 v5 c0,2 -1,3 -3,3 c-2,0 -3,-1 -3,-3 v-5 c0,-2 1,-4 3,-4" class="t"/>
<circle cx="1880" cy="978" r="3" class="w"/><circle cx="1892" cy="978" r="2" class="w"/>
<rect x="1805" y="987" width="15" height="12" fill="none" stroke="#ddd" stroke-width="1" stroke-dasharray="2 1.6"/><circle cx="1813" cy="993" r="3" fill="none" stroke="#3fb9b4" stroke-width="1.5"/><path d="M1810,996 l-3,5" stroke="#3fb9b4" stroke-width="1.6"/>
<path d="M1832,995 v-6 a1,1 0 0 1 2,0 v-2 a1,1 0 0 1 2,0 v0 a1,1 0 0 1 2,0 v2 a1,1 0 0 1 2,0 v9 c0,4 -2,5 -4,5 s-4,-2 -6,-6 c-1,-2 1,-3 2,-2 z" class="w"/>
<circle cx="1858" cy="996" r="6" fill="#d8d8d8"/><path d="M1854,999 L1864,988" stroke="#3fb9b4" stroke-width="3"/>
<rect x="1875" y="986" width="14" height="16" fill="#ddd"/><path d="M1876,1001 L1888,987 v14 z" fill="#333"/>
<path d="M1869,1004 v-3 h-3 z M1893,1004 v-3 h-3 z M1821,1003 v-3 h-3 z" fill="#ddd"/>
<path d="M1853,984 v-3 h-3 z M1871,984 v-3 h-3 z M1897,984 v-3 h-3 z" fill="#ddd"/>

<!-- resize grip + window bottom -->
<path d="M1908,1009 h1 M1912,1009 h1 M1916,1009 h1 M1912,1005 h1 M1916,1005 h1 M1916,1001 h1" stroke="#aaa" stroke-width="2"/>
<rect y="1011" width="1920" height="13" fill="url(#wb)"/>
<path d="M1902,1013 h7 l-3.5,5 z" fill="#555"/>
</svg>
</body>
</html>
